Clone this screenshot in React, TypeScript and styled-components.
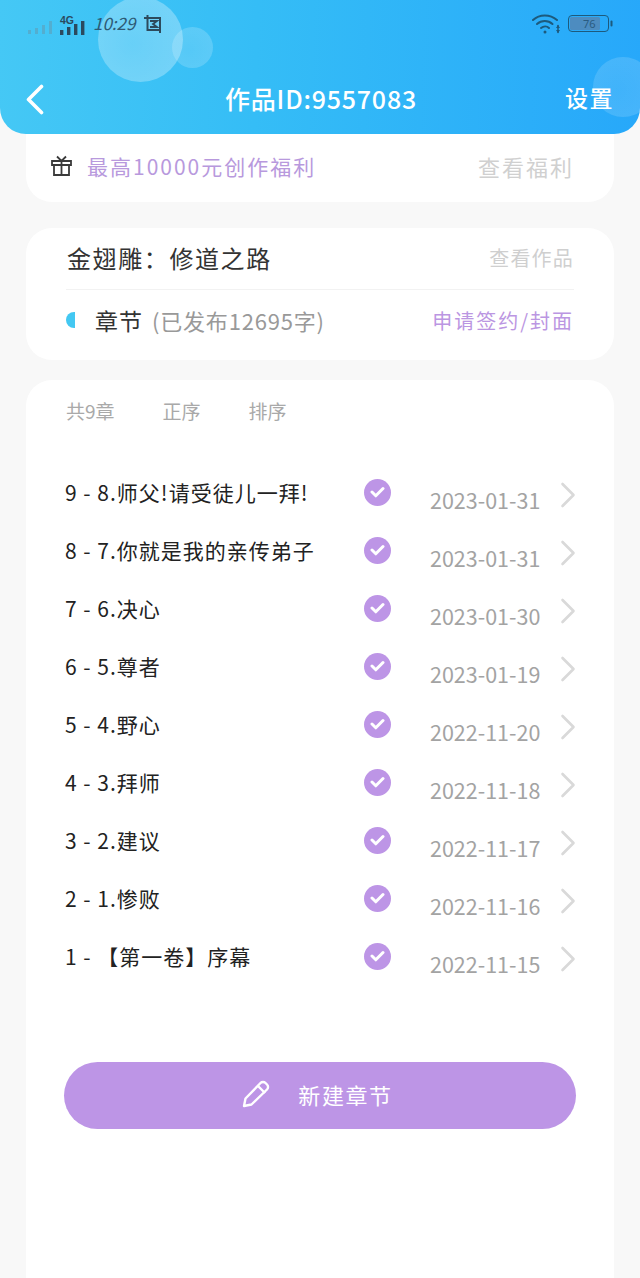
import React from "react";
import styled, { createGlobalStyle } from "styled-components";

const Global = createGlobalStyle`
  html, body { margin: 0; padding: 0; background: #f8f8f8; }
  body { font-family: "Noto Sans CJK SC", "Noto Sans", sans-serif; }
  * { box-sizing: border-box; }
`;

const Page = styled.div`
  width: 640px;
  height: 1278px;
  overflow: hidden;
  background: #f8f8f8;
  display: flex;
  flex-direction: column;
`;

const Header = styled.header`
  position: relative;
  z-index: 2;
  height: 134px;
  flex: none;
  overflow: hidden;
  padding: 8px 26px 0 28px;
  border-radius: 0 0 26px 26px;
  background: linear-gradient(92deg, #45c8f5 0%, #35bdf6 40%, #27a8fa 100%);
  display: flex;
  flex-direction: column;
`;

const Bubble = styled.div<{ $x: number; $y: number; $s: number; $o: number }>`
  position: absolute;
  left: ${(p) => p.$x}px;
  top: ${(p) => p.$y}px;
  width: ${(p) => p.$s}px;
  height: ${(p) => p.$s}px;
  border-radius: 50%;
  background: radial-gradient(circle at 40% 55%, rgba(255, 255, 255, ${(p) => p.$o * 0.7}), rgba(255, 255, 255, ${(p) => p.$o}));
`;

const StatusBar = styled.div`
  position: relative;
  height: 32px;
  display: flex;
  align-items: center;
  justify-content: space-between;
  color: #25566f;
`;

const StatusGroup = styled.div<{ $gap?: number }>`
  display: flex;
  align-items: center;
  gap: ${(p) => p.$gap ?? 0}px;
`;

const Clock = styled.span`
  font-family: "Noto Sans CJK SC", sans-serif;
  font-size: 17px;
  font-style: italic;
  margin: 0 9px 3px 5px;
  color: #2d5a75;
`;

const NavBar = styled.div`
  position: relative;
  flex: 1;
  display: flex;
  align-items: center;
  color: #fff;
  padding-top: 25px;
`;

const BackLink = styled.span`
  display: flex;
  margin-left: -2px;
`;

const Title = styled.div`
  margin: 0 0 4px 181px;
  font-size: 25px;
  line-height: 34px;
  letter-spacing: 0.8px;
  font-weight: 500;
  white-space: nowrap;
`;

const Settings = styled.div`
  margin: 0 0 5px auto;
  font-size: 23px;
  font-weight: 500;
  letter-spacing: 1.5px;
`;

const Card = styled.section`
  background: #fff;
  border-radius: 26px;
  margin: 0 26px;
`;

const PromoCard = styled(Card)`
  height: 68px;
  margin-bottom: 26px;
  border-radius: 0 0 26px 26px;
  padding: 0 40px 5px 25px;
  display: flex;
  align-items: center;
`;

const PromoText = styled.span`
  font-size: 21px;
  color: #b899dd;
  margin-left: 15px;
  flex: 1;
  white-space: nowrap;
  letter-spacing: 2px;
`;

const PromoLink = styled.span`
  font-size: 22px;
  color: #d0d0d0;
  letter-spacing: 2px;
`;

const WorkCard = styled(Card)`
  height: 132px;
  margin-bottom: 20px;
  padding: 0 40px;
`;

const WorkRow = styled.div`
  height: 62px;
  display: flex;
  align-items: center;
  justify-content: space-between;
  border-bottom: 1px solid #f2f2f2;
  padding: 0 0 2px 1px;
`;

const WorkName = styled.span`
  font-size: 24px;
  letter-spacing: 1.6px;
  color: #333;
`;

const WorkLink = styled.span`
  font-size: 20px;
  letter-spacing: 1.2px;
  color: #cfcfcf;
`;

const ChapterRow = styled.div`
  height: 64px;
  padding-bottom: 4px;
  display: flex;
  align-items: center;
  justify-content: space-between;
`;

const ChapterLabel = styled.span`
  display: flex;
  align-items: center;
  font-size: 23px;
  letter-spacing: 1px;
  color: #333;
`;

const HalfDot = styled.i`
  width: 9px;
  height: 16px;
  margin-right: 20px;
  border-radius: 9px 0 0 9px;
  background: #43c8f2;
`;

const ChapterCount = styled.span`
  color: #999;
  font-size: 22px;
  margin-left: 9px;
  letter-spacing: 0.8px;
`;

const SignLink = styled.span`
  font-size: 20px;
  color: #bb96e2;
  letter-spacing: 2px;
`;

const ListCard = styled(Card)`
  flex: 1;
  border-radius: 26px 26px 0 0;
  padding: 16px 38px 0 39px;
`;

const ListTabs = styled.div`
  display: flex;
  gap: 48px;
  height: 28px;
  align-items: center;
  font-size: 19px;
  color: #a9a9a9;
  margin-left: 1px;
  margin-bottom: 39px;
`;

const Rows = styled.div`
  display: flex;
  flex-direction: column;
`;

const Row = styled.div`
  height: 58px;
  display: flex;
  align-items: center;
`;

const RowTitle = styled.span`
  width: 299px;
  font-size: 21px;
  letter-spacing: 1px;
  color: #222;
  white-space: nowrap;
`;

const CheckBadge = styled.span`
  width: 27px;
  height: 27px;
  border-radius: 50%;
  background: #bd95e6;
  display: flex;
  align-items: center;
  justify-content: center;
  margin-right: 39px;
`;

const RowDate = styled.span`
  width: 115px;
  font-size: 21.5px;
  color: #a3a3a3;
  margin-top: 14px;
  white-space: nowrap;
`;

const RowArrow = styled.span`
  display: flex;
  margin: 6px 0 0 15px;
`;

const NewButton = styled.button`
  width: 512px;
  height: 67px;
  margin: 77px 0 0 -1px;
  border: 0;
  border-radius: 34px;
  background: #bd95e6;
  color: #fff;
  font-family: inherit;
  font-size: 22px;
  letter-spacing: 1.6px;
  display: flex;
  align-items: center;
  justify-content: center;
  gap: 27px;
  padding: 0 5px 4px 0;
`;

const chapters = [
  ["9 - 8.师父!请受徒儿一拜!", "2023-01-31"],
  ["8 - 7.你就是我的亲传弟子", "2023-01-31"],
  ["7 - 6.决心", "2023-01-30"],
  ["6 - 5.尊者", "2023-01-19"],
  ["5 - 4.野心", "2022-11-20"],
  ["4 - 3.拜师", "2022-11-18"],
  ["3 - 2.建议", "2022-11-17"],
  ["2 - 1.惨败", "2022-11-16"],
  ["1 - 【第一卷】序幕", "2022-11-15"],
];

const SignalIcon = () => (
  <svg width="60" height="30" viewBox="0 0 60 30" fill="none">
    <g fill="#5f9fb8" opacity="0.6">
      <rect x="0" y="21" width="3" height="4" />
      <rect x="7" y="19" width="3" height="6" />
      <rect x="14" y="16" width="3" height="9" />
      <rect x="21" y="12" width="3" height="13" />
    </g>
    <g fill="#2b4a5e">
      <rect x="32" y="21" width="3.4" height="5" />
      <rect x="39" y="18" width="3.4" height="8" />
      <rect x="46" y="15" width="3.4" height="11" />
      <rect x="53" y="12" width="3.4" height="14" />
    </g>
    <text x="32" y="14.5" fontSize="10.5" fontWeight="700" fill="#2b4a5e" fontFamily="Liberation Sans, sans-serif">4G</text>
  </svg>
);

const ScreenshotIcon = () => (
  <svg width="19" height="18" viewBox="0 0 19 18" fill="none" stroke="#2d4a5c" strokeWidth="2">
    <path d="M1 3h15v12H3.500V0M16 15v3" />
    <path d="M0 3h3M6 6h7l-4 3 4 3H6" strokeWidth="1.800" />
  </svg>
);

const WifiIcon = () => (
  <svg width="28" height="22" viewBox="0 0 28 22" fill="none" stroke="#1d5a7d" strokeWidth="2" strokeLinecap="round">
    <path d="M1 7c6.500-6 17-6 24 0" />
    <path d="M5 11c4.500-4 11-4 15.500 0" />
    <path d="M9 15c2.500-2 6-2 8 0" />
    <circle cx="13" cy="19" r="1.500" fill="#1d5a7d" stroke="none" />
    <path d="M26 12.500v7" strokeWidth="1.500" />
    <path d="M24 15l2-3 2 3M24 17l2 3 2-3" fill="#1d5a7d" stroke="none" />
  </svg>
);

const BatteryIcon = () => (
  <svg width="46" height="20" viewBox="0 0 46 20">
    <rect x="0.500" y="1.500" width="40" height="16" rx="3.500" fill="none" stroke="#1d5a7d" strokeWidth="1" />
    <rect x="2" y="3" width="30" height="13" rx="1.500" fill="#4d8cc0" />
    <rect x="42.500" y="6.500" width="2" height="6" rx="1" fill="#1d5a7d" />
    <text x="15" y="13.500" fontSize="11" fill="#2a5b80" fontFamily="Noto Sans, sans-serif">76</text>
  </svg>
);

const BackIcon = () => (
  <svg width="18" height="31" viewBox="0 0 18 31" fill="none" stroke="#fff" strokeWidth="3.600" strokeLinecap="round" strokeLinejoin="round">
    <path d="M15.500 2.500 2.500 15.500l13 13" />
  </svg>
);

const GiftIcon = () => (
  <svg width="21" height="21" viewBox="0 0 21 21" fill="none" stroke="#3a3a3a" strokeWidth="1.800">
    <path d="M1 6h19v4H1zM3 10v10h15V10M10.500 6v14M6 1.500l4.500 4.500L15 1.500" />
  </svg>
);

const CheckIcon = () => (
  <svg width="15" height="12" viewBox="0 0 15 12" fill="none" stroke="#fff" strokeWidth="3" strokeLinecap="round" strokeLinejoin="round">
    <path d="M2 6l3.800 3.800L13 2.500" />
  </svg>
);

const ChevronIcon = () => (
  <svg width="16" height="26" viewBox="0 0 16 26" fill="none" stroke="#d9d9d9" strokeWidth="2.600" strokeLinecap="round" strokeLinejoin="round">
    <path d="M2.500 2 13.500 13 2.500 24" />
  </svg>
);

const PencilIcon = () => (
  <svg width="29" height="28" viewBox="0 0 29 28" fill="none" stroke="#fff" strokeWidth="2.400" strokeLinejoin="round">
    <path d="M2 26l1.500-7.500L18.500 3a3.500 3.500 0 0 1 5 0l1.500 1.500a3.500 3.500 0 0 1 0 5L9.500 24.500z" />
    <path d="M16 6l7 7" />
  </svg>
);

export default function App() {
  return (
    <Page>
      <Global />
      <Header>
        <Bubble $x={98} $y={-3} $s={85} $o={0.32} />
        <Bubble $x={172} $y={27} $s={41} $o={0.2} />
        <Bubble $x={593} $y={57} $s={60} $o={0.16} />
        <StatusBar>
          <StatusGroup>
            <SignalIcon />
            <Clock>10:29</Clock>
            <ScreenshotIcon />
          </StatusGroup>
          <StatusGroup $gap={8}>
            <WifiIcon />
            <BatteryIcon />
          </StatusGroup>
        </StatusBar>
        <NavBar>
          <BackLink>
            <BackIcon />
          </BackLink>
          <Title>作品ID:9557083</Title>
          <Settings>设置</Settings>
        </NavBar>
      </Header>
      <PromoCard>
        <GiftIcon />
        <PromoText>最高10000元创作福利</PromoText>
        <PromoLink>查看福利</PromoLink>
      </PromoCard>
      <WorkCard>
        <WorkRow>
          <WorkName>金翅雕：修道之路</WorkName>
          <WorkLink>查看作品</WorkLink>
        </WorkRow>
        <ChapterRow>
          <ChapterLabel>
            <HalfDot />
            章节
            <ChapterCount>(已发布12695字)</ChapterCount>
          </ChapterLabel>
          <SignLink>申请签约/封面</SignLink>
        </ChapterRow>
      </WorkCard>
      <ListCard>
        <ListTabs>
          <span>共9章</span>
          <span>正序</span>
          <span>排序</span>
        </ListTabs>
        <Rows>
          {chapters.map(([name, date]) => (
            <Row key={name}>
              <RowTitle>{name}</RowTitle>
              <CheckBadge>
                <CheckIcon />
              </CheckBadge>
              <RowDate>{date}</RowDate>
              <RowArrow>
                <ChevronIcon />
              </RowArrow>
            </Row>
          ))}
        </Rows>
        <NewButton>
          <PencilIcon />
          新建章节
        </NewButton>
      </ListCard>
    </Page>
  );
}
